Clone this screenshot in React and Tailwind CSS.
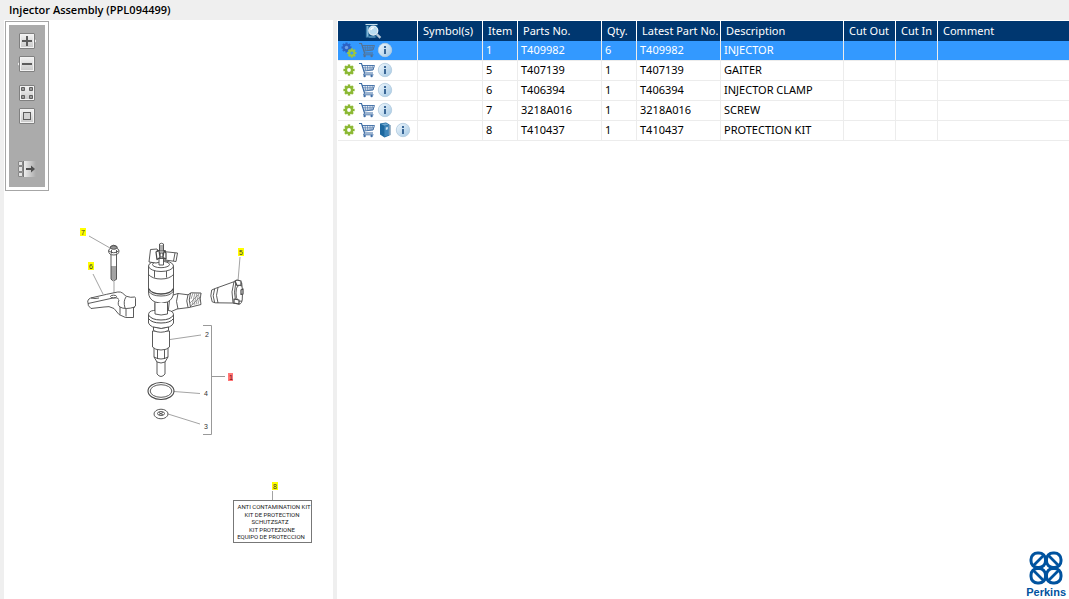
const COLUMNS = [
  { key: "symbols", label: "Symbol(s)", width: "w-[65px]" },
  { key: "item", label: "Item", width: "w-[35px]" },
  { key: "partNo", label: "Parts No.", width: "w-[84px]" },
  { key: "qty", label: "Qty.", width: "w-[35px]" },
  { key: "latest", label: "Latest Part No.", width: "w-[84px]" },
  { key: "description", label: "Description", width: "w-[123px]" },
  { key: "cutOut", label: "Cut Out", width: "w-[52px]" },
  { key: "cutIn", label: "Cut In", width: "w-[42px]" },
  { key: "comment", label: "Comment", width: "" },
];

const PARTS = [
  { item: "1", partNo: "T409982", qty: "6", latest: "T409982", description: "INJECTOR", assembly: true },
  { item: "5", partNo: "T407139", qty: "1", latest: "T407139", description: "GAITER" },
  { item: "6", partNo: "T406394", qty: "1", latest: "T406394", description: "INJECTOR CLAMP" },
  { item: "7", partNo: "3218A016", qty: "1", latest: "3218A016", description: "SCREW" },
  { item: "8", partNo: "T410437", qty: "1", latest: "T410437", description: "PROTECTION KIT", book: true },
];

const TEETH = [0, 45, 90, 135, 180, 225, 270, 315];

function Gear({ cx, cy, r, color, hole }) {
  return (
    <g>
      {TEETH.map((a) => (
        <rect
          key={a}
          x={cx - r * 0.22}
          y={cy - r}
          width={r * 0.44}
          height={r}
          fill={color}
          transform={`rotate(${a} ${cx} ${cy})`}
        />
      ))}
      <circle cx={cx} cy={cy} r={r * 0.76} fill={color} />
      <circle cx={cx} cy={cy} r={r * 0.34} fill={hole} />
    </g>
  );
}

function GearIcon() {
  return (
    <svg width="16" height="16" viewBox="0 0 16 16" aria-hidden="true">
      <Gear cx={8} cy={8} r={5.6} color="#8bb833" hole="#fff" />
    </svg>
  );
}

function AssemblyIcon() {
  return (
    <svg width="16" height="16" viewBox="0 0 16 16" aria-hidden="true">
      <Gear cx={5.5} cy={5.5} r={5} color="#2b62c6" hole="#6f9fe6" />
      <Gear cx={10.8} cy={11} r={4.6} color="#9cc63f" hole="#3399ff" />
    </svg>
  );
}

function CartIcon({ color }) {
  return (
    <svg width="16" height="16" viewBox="0 0 16 16" fill="none" stroke={color} aria-hidden="true">
      <path d="M0 1.500h2.500l3 9.500h8.500" strokeWidth="1.200" />
      <path d="M3 3.500h12.500l-1.500 4.500-9.300 1" strokeWidth=".9" />
      <path d="M3.600 5.300h11.400M4.200 7h10.300M6 3.500l.6 5M8.500 3.500l.3 5M11 3.500v5M13.400 3.500l-.6 4.700" strokeWidth=".6" />
      <path d="M5.500 11l-1 1.800h10" strokeWidth=".9" />
      <circle cx="5.600" cy="14" r="1" fill={color} strokeWidth=".4" />
      <circle cx="12.600" cy="14" r="1" fill={color} strokeWidth=".4" />
    </svg>
  );
}

function InfoIcon() {
  return (
    <svg width="16" height="16" viewBox="0 0 16 16" aria-hidden="true">
      <defs>
        <linearGradient id="info-fill" x1="0" y1="0" x2="1" y2="1">
          <stop offset="0" stopColor="#f1f8fd" />
          <stop offset="1" stopColor="#a3c8e4" />
        </linearGradient>
      </defs>
      <circle cx="8" cy="8" r="6.700" fill="url(#info-fill)" stroke="#b4cde0" strokeWidth=".9" />
      <path d="M7 4h2v2H7zM7 7h2v5H7z" fill="#3a6797" />
    </svg>
  );
}

function BookIcon() {
  return (
    <svg width="16" height="16" viewBox="0 0 16 16" aria-hidden="true">
      <path d="M3 1.500L9 .5l3.500 2v11l-5 2-4.500-3z" fill="#1d689f" />
      <path d="M4 2l5-.8 2.800 1.500-4.300 1z" fill="#6fa8d0" />
      <path d="M7.400 4.300l4.300-1v10l-4.300 1.500z" fill="#3f86ba" />
      <path d="M8.800 5.600l2-.5v2.200l-2 .6z" fill="#d2e6f3" />
      <path d="M12.300 3v10" stroke="#dbe9f3" strokeWidth=".8" />
      <path d="M13 3v10.200" stroke="#174f7d" strokeWidth=".8" />
    </svg>
  );
}

function PreviewIcon() {
  return (
    <svg width="18" height="16" viewBox="0 0 18 16" aria-hidden="true">
      <path d="M1.500.5h12v14h-12z" fill="#0d5286" />
      <path d="M1.500 1.500h12" stroke="#c8dfee" />
      <path d="M2.500 3v11.500h2V3zM3.500 13.500h8v1h-8z" fill="#7fb5d8" />
      <circle cx="9.300" cy="7.600" r="4.500" fill="#b9dcf0" stroke="#e9f3f9" strokeWidth="1.200" />
      <path d="M6.800 7.200a2.800 2.800 0 0 1 3-2.400" fill="none" stroke="#fff" strokeWidth="1.200" />
      <path d="M12.600 11l3.800 3.800" stroke="#b7c8d8" strokeWidth="2.400" />
    </svg>
  );
}

function ToolIcon({ kind }) {
  return (
    <svg width="20" height="16" viewBox="0 0 20 16" fill="none" aria-hidden="true">
      <defs>
        <linearGradient id="tool-fill" x1="0" y1="0" x2="0" y2="1">
          <stop offset="0" stopColor="#f4f4f4" />
          <stop offset="1" stopColor="#c6c6c6" />
        </linearGradient>
        <linearGradient id="tool-fade">
          <stop offset="0" stopColor="#f2f2f2" />
          <stop offset="1" stopColor="#ababab" />
        </linearGradient>
      </defs>
      {kind === "in" && <path d="M17 4.500L20 8l-3 3.500z" fill="#ededed" stroke="#8a8a8a" strokeWidth=".6" />}
      {kind === "out" && <path d="M3 4.500L0 8l3 3.500z" fill="#ededed" stroke="#8a8a8a" strokeWidth=".6" />}
      {kind !== "list" && (
        <>
          <rect x="2.500" y=".5" width="15" height="15" rx=".5" fill="url(#tool-fill)" stroke="#808080" />
          <rect x="3.500" y="1.500" width="13" height="13" stroke="#f3f3f3" />
        </>
      )}
      {kind === "in" && <path d="M5 8h10M10 3v10" stroke="#5c5c5c" strokeWidth="2" />}
      {kind === "out" && <path d="M5 8h10" stroke="#5c5c5c" strokeWidth="2" />}
      {kind === "fit" && (
        <path
          d="M4.500 2.500h3v3h-3zM12.500 2.500h3v3h-3zM4.500 10.500h3v3h-3zM12.500 10.500h3v3h-3z"
          fill="#999"
          stroke="#5f5f5f"
        />
      )}
      {kind === "actual" && <rect x="6.500" y="4.500" width="7" height="7" fill="#d2d2d2" stroke="#5c5c5c" />}
      {kind === "list" && (
        <>
          <rect x="6" y="0" width="13" height="16" fill="url(#tool-fade)" />
          <path d="M1.500.5h4v4h-4zM1.500 5.500h4v5h-4zM1.500 11.500h4v4h-4z" fill="#e4e4e4" stroke="#888" />
          <path d="M6.500 0v16" stroke="#777" />
          <path d="M9 8h5" stroke="#4f4f4f" strokeWidth="2" />
          <path d="M14 4.500L18 8l-4 3.500z" fill="#4f4f4f" />
        </>
      )}
    </svg>
  );
}

function ToolButton({ kind, label }) {
  return (
    <button type="button" aria-label={label} className="block h-4 w-5 cursor-pointer">
      <ToolIcon kind={kind} />
    </button>
  );
}

function Toolbar() {
  return (
    <div className="mt-px ml-px w-11 border border-[#a6a6a6] bg-white p-[3px]">
      <div className="flex h-[162px] flex-col items-center justify-between bg-[#ababab] pt-2 pb-[10px]">
        <div className="flex flex-col gap-[13px]">
          <div className="flex flex-col gap-[7px]">
            <ToolButton kind="in" label="Zoom in" />
            <ToolButton kind="out" label="Zoom out" />
          </div>
          <div className="flex flex-col gap-[7px]">
            <ToolButton kind="fit" label="Fit to window" />
            <ToolButton kind="actual" label="Actual size" />
          </div>
        </div>
        <ToolButton kind="list" label="Hide list" />
      </div>
    </div>
  );
}

function Callout({ x, y, n, selected }) {
  return (
    <g>
      <rect x={x - 3} y={y - 4} width={selected ? 5 : 6} height="8" fill={selected ? "#f77" : "#ff0"} />
      <text x={x} y={y + 3} textAnchor="middle" fill={selected ? "#700" : "#333"} className="text-[7px]">
        {n}
      </text>
    </g>
  );
}

const KIT_LINES = [
  ["ANTI CONTAMINATION KIT", 274, 509],
  ["KIT DE PROTECTION", 272, 517],
  ["SCHUTZSATZ", 270, 524],
  ["KIT PROTEZIONE", 272, 532],
  ["EQUIPO DE PROTECCION", 271, 539],
];

function Diagram() {
  return (
    <svg
      width="329"
      height="408"
      viewBox="4 191 329 408"
      className="block font-['Liberation_Sans',sans-serif] text-[6px]"
      role="img"
      aria-label="Exploded view of the injector assembly"
    >
      {/* leader lines */}
      <g fill="none" stroke="#999" strokeWidth=".9">
        <path d="M89 236L110 248M93 274l10 20M240 257l-2 24M272.500 491v10M114 282v15" />
        <path d="M170 339.500L201 335M174 391.500L200 393.500M168 414l32 10" />
        <path d="M203 325.500h8.500v109H203M212 376.500h13" strokeWidth="1" />
      </g>
      <g fill="#fff" stroke="#484848" strokeWidth=".9" strokeLinejoin="round">
        {/* screw */}
        <path d="M111 254v25q2.700 4 5.500 0v-25z" />
        <path d="M111 267h5.500M111 269h5.500M111 271h5.500M111 273h5.500M111 275h5.500M111 277h5.500M111 279h5.500" strokeWidth="1" />
        <path d="M108.500 251q0-2 2-2.500v-2q3.200-2.600 6.500 0v2q2 .5 2 2.500-.3 4-5.200 4t-5.300-4z" />
        <ellipse cx="113.700" cy="247.500" rx="3.200" ry="1.800" fill="#999" />
        <path d="M109 251q4.700 3.500 9.500 0M111.500 250v3.500M116.500 250v3.500" fill="none" />
        {/* clamp */}
        <path d="M87.700 301q1-2.500 3-3l16-3.700 11-2.300q3-.5 5 1.200l3.300 3q5 1.800 8.700.8.900.3.800 1.500v7.500l-2 1.500v10h-8l-6.500-3-5-6q-5-3-10-1.500l-13 1.500q-3.500-2-3.300-7.500z" />
        <path d="M88 303.500l25-5.500q5-1 6 1.500M119 300q-2 5 1 7 5 3 15 0M120 307v7.500M126 308.500v8M91 298q4 1 8 0M126 297q-3 4-1 11" fill="none" />
        <ellipse cx="113.500" cy="296.500" rx="3" ry="1.300" />
        {/* gaiter */}
        <path d="M211.700 290l3.500-1.500 18-6.500q5-2 8.500.8 1.500 9.500.5 17.500-1 5-5 3.500l-5-.8-17-.2-3-1q-2.500-6-.5-11.800z" />
        <path d="M214.700 288.800q-3 7 0 14M218 287.500q-3 8 0 15.500M234 281.500q-3.500 10-1 21.500M236 281q-3 11 0 23M242 286q-6-3-6 7t6 8" fill="none" />
        <path d="M235 281l2-1 4 1v4l-4 .5zM234 299l5 1v4l-5-1zM241 290l2-1v5l-2 .5z" strokeWidth="1.200" />
        {/* side connector */}
        <path d="M170 296l8-2.500 10 1.300 3-2 10 .2q-1.500 6 0 11.500l-12 3-12 1.500-9 4z" />
        <path d="M178 293.500q-3 8 0 15.500M188 294.800q-2.500 6 0 12.500M190.500 293q-2.500 7 0 14" fill="none" />
        <path d="M192 305l3-12M194 305l3-12M196 304.500l3-11.500M198 304l3-11M191 299l2-6M190 303l8-8M191 306l9-9" stroke="#777" strokeWidth=".7" />
        {/* body */}
        <path d="M155 300v14h12.500v-14z" />
        <path d="M158 304v10M165 304v10" stroke="#888" />
        <path d="M148.500 266v26q0 7 6.500 10 6 2.500 12.500 0 6-3 6-10v-26z" />
        <path d="M148.500 288.500q3 5.500 12.500 5.500t12.500-5.500" fill="none" strokeWidth="1.300" />
        <path d="M148.500 291q3 5 12.500 5t12.500-5" fill="none" />
        <path d="M148.500 274.500q4 4.500 12.500 4.500t12.500-4.500M154.500 269.500v8M166.500 269.500v8" fill="none" />
        <ellipse cx="161" cy="266" rx="12.500" ry="5.500" />
        <ellipse cx="161" cy="264.500" rx="8.500" ry="3.200" />
        {/* electrical head */}
        <path d="M149 262l1.500-12.500 6.500-.5 3 4v9l-4 1z" />
        <path d="M163 251.500l14.500 1.500-1.500 8.500-11-1.500zM175 253l-1.500 8" />
        <path d="M157 250.500h8.500v8H157zM159 258v7h4.500v-7" />
        <path d="M159.500 251v-7q2-1.500 4 0v7zM159.500 246h4M159.500 248h4M159.500 250h4" />
        <path d="M156 252l3-1.500 1 7-3 2zM164 251l2 2v6l-3-1.500zM160 253h3v4h-3z" strokeWidth="1.200" />
        {/* collar */}
        <path d="M148.500 315q0-4 5-4.500 8-1.500 15 0 5 .5 5 4.500v8q-2 5-12.500 5.500-10.500-.5-12.500-5.500z" />
        <path d="M155 303v11q6 2 12.500 0v-11" />
        <path d="M148.500 315q3 5 12.500 5t12.500-5M148.500 318.500q3 4.500 12.500 4.500t12.500-4.500" fill="none" strokeWidth="1" />
        {/* nozzle */}
        <path d="M157 361v13q4 5 8 0v-13z" />
        <path d="M154 348v9l3 5q4 2 8 0l3-5v-9z" />
        <path d="M157.500 350v9M164.500 350v9M154 357q7 4 14 0" fill="none" />
        <path d="M152.500 331v16q2.500 3 8.500 3t8.500-3v-16z" />
        <path d="M153.500 327v3.500q7 3.500 15 0V327q-7 3-15 0z" />
        {/* o-ring and washer */}
        <ellipse cx="161" cy="391" rx="13" ry="8.500" strokeWidth="1.100" />
        <ellipse cx="161" cy="391" rx="10.800" ry="6.300" />
        <ellipse cx="161" cy="414" rx="7" ry="4.800" />
        <ellipse cx="161" cy="413.500" rx="3.500" ry="2" />
        <path d="M159 412.500l4 2.500M163 412.500l-4 2" />
      </g>
      <g fill="#333" className="text-[7px]">
        <text x="205" y="337">2</text>
        <text x="204" y="396">4</text>
        <text x="204" y="429">3</text>
      </g>
      <Callout x={83} y={232} n="7" />
      <Callout x={91} y={266} n="6" />
      <Callout x={241} y={252} n="5" />
      <Callout x={275} y={486} n="8" />
      <Callout x={231} y={377} n="1" selected />
      <rect x="233.500" y="500.500" width="78" height="42" fill="#fff" stroke="#777" />
      <g fill="#222" textAnchor="middle" className="font-['Roboto',sans-serif]">
        {KIT_LINES.map(([line, x, y]) => (
          <text key={line} x={x} y={y}>
            {line}
          </text>
        ))}
      </g>
    </svg>
  );
}

function RowActions({ part }) {
  return (
    <div className="flex gap-0.5">
      <button type="button" aria-label="Part details" className="cursor-pointer">
        {part.assembly ? <AssemblyIcon /> : <GearIcon />}
      </button>
      <button type="button" aria-label="Add to cart" className="cursor-pointer">
        <CartIcon color={part.assembly ? "#56708f" : "#3a6aa3"} />
      </button>
      {part.book && (
        <button type="button" aria-label="Open book" className="cursor-pointer">
          <BookIcon />
        </button>
      )}
      <button type="button" aria-label="Information" className="cursor-pointer">
        <InfoIcon />
      </button>
    </div>
  );
}

function PartsTable() {
  return (
    <table className="w-full table-fixed border-separate border-spacing-0 text-left whitespace-nowrap">
      <thead>
        <tr className="h-5 bg-[#003770] text-white">
          <th scope="col" className="w-20 border-r border-white p-0 pr-2.5">
            <button type="button" aria-label="Preview" className="mx-auto block cursor-pointer">
              <PreviewIcon />
            </button>
          </th>
          {COLUMNS.map((c) => (
            <th
              key={c.key}
              scope="col"
              className={`${c.width} border-white p-0 pl-[5px] font-normal not-last:border-r`}
            >
              {c.label}
            </th>
          ))}
        </tr>
      </thead>
      <tbody>
        {PARTS.map((part) => (
          <tr
            key={part.item}
            className={`h-5 align-top ${part.assembly ? "bg-[#3399ff] text-white" : "text-black"}`}
          >
            <td className="border-r border-b border-[#ececec] p-0 pt-px pl-[3px]">
              <RowActions part={part} />
            </td>
            {COLUMNS.map((c) => (
              <td key={c.key} className="border-b border-[#ececec] p-0 pt-px pl-[3px] not-last:border-r">
                {part[c.key]}
              </td>
            ))}
          </tr>
        ))}
      </tbody>
    </table>
  );
}

function PerkinsLogo() {
  return (
    <div className="mt-auto mr-[3px] flex flex-col items-center self-end text-[#00539f]">
      <svg width="34" height="34" viewBox="0 0 34 34" fill="none" stroke="currentColor" aria-hidden="true">
        <rect x="2" y="2" width="14.500" height="14.500" rx="6.500" strokeWidth="3" />
        <rect x="17.500" y="2" width="14.500" height="14.500" rx="6.500" strokeWidth="3" />
        <rect x="2" y="17.500" width="14.500" height="14.500" rx="6.500" strokeWidth="3" />
        <rect x="17.500" y="17.500" width="14.500" height="14.500" rx="6.500" strokeWidth="3" />
        <path d="M4.500 14.500l10-10M19.500 4.500l10 10M4.500 19.500l10 10M19.500 29.500l10-10" strokeWidth="2.800" />
      </svg>
      <span className="font-['Liberation_Sans',sans-serif] text-[11px] leading-[14px] font-bold">Perkins</span>
    </div>
  );
}

export default function App() {
  return (
    <div className="flex min-h-screen flex-col bg-[#efefef] font-['Noto_Sans',sans-serif] text-[11px] leading-4 text-black">
      <h1 className="h-5 pl-[9px] font-['Open_Sans',sans-serif] leading-5 font-semibold">
        Injector Assembly (PPL094499)
      </h1>
      <div className="flex flex-1 gap-1 pl-1">
        <aside className="w-[329px] shrink-0 bg-white">
          <Toolbar />
          <Diagram />
        </aside>
        <main className="flex min-w-0 flex-1 flex-col bg-white pt-px pl-px">
          <PartsTable />
          <PerkinsLogo />
        </main>
      </div>
    </div>
  );
}
